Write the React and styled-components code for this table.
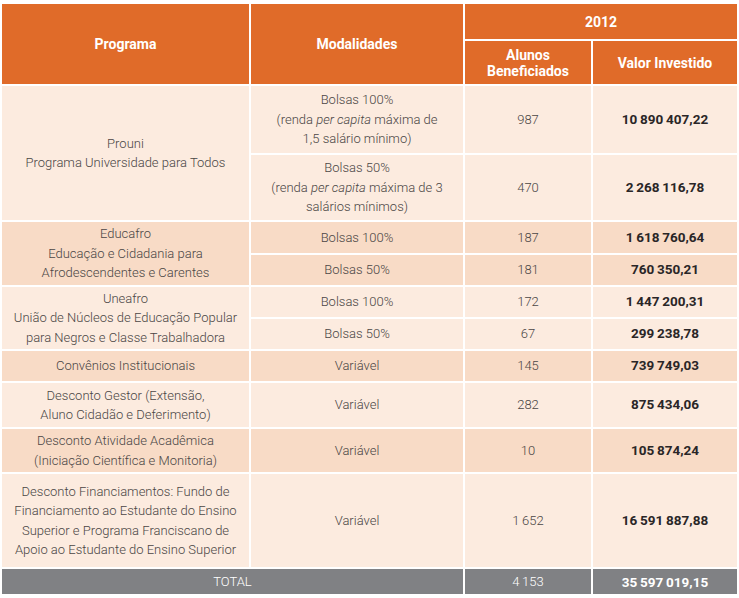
import React from "react";
import styled, { createGlobalStyle } from "styled-components";

const GlobalStyle = createGlobalStyle`
  body {
    margin: 0;
    background: #ffffff;
    font-family: Roboto, "Liberation Sans", sans-serif;
  }
`;

const Page = styled.div`
  padding: 2px 0 0 0;
`;

const Table = styled.table`
  width: 739px;
  table-layout: fixed;
  border-collapse: separate;
  border-spacing: 2px;
  font-size: 13px;
  color: #4a4645;
`;

const Head = styled.th`
  background: #e06b29;
  color: #ffffff;
  font-weight: 700;
  font-size: 14px;
  line-height: 16px;
  text-align: center;
  vertical-align: middle;
  padding: 0 4px;
  height: ${(p) => p.$h}px;
`;

const Cell = styled.td`
  background: ${(p) => (p.$dark ? "#f8dbc6" : "#fcebdf")};
  text-align: center;
  vertical-align: middle;
  line-height: 19.5px;
  font-weight: 300;
  padding: 0 4px;
  height: ${(p) => p.$h}px;
`;

const Value = styled(Cell)`
  font-weight: 700;
  font-size: 13.5px;
  color: #2a2627;
`;

const TotalCell = styled.td`
  background: #808184;
  color: #ffffff;
  text-align: center;
  vertical-align: middle;
  font-weight: ${(p) => (p.$bold ? 700 : 300)};
  font-size: ${(p) => (p.$bold ? "13.5px" : "13px")};
  height: 25px;
  padding: 0;
`;

const T = "\u2009";

const rows = [
  {
    prog: ["Prouni", "Programa Universidade para Todos"],
    dark: false,
    items: [
      { mod: <>Bolsas 100%<br />(renda <i>per capita</i> máxima de<br />1,5 salário mínimo)</>, alunos: "987", valor: `10${T}890${T}407,22`, h: 67 },
      { mod: <>Bolsas 50%<br />(renda <i>per capita</i> máxima de 3<br />salários mínimos)</>, alunos: "470", valor: `2${T}268${T}116,78`, h: 65 },
    ],
  },
  {
    prog: ["Educafro", "Educação e Cidadania para", "Afrodescendentes e Carentes"],
    dark: true,
    items: [
      { mod: "Bolsas 100%", alunos: "187", valor: `1${T}618${T}760,64`, h: 31 },
      { mod: "Bolsas 50%", alunos: "181", valor: `760${T}350,21`, h: 30 },
    ],
  },
  {
    prog: ["Uneafro", "União de Núcleos de Educação Popular", "para Negros e Classe Trabalhadora"],
    dark: false,
    items: [
      { mod: "Bolsas 100%", alunos: "172", valor: `1${T}447${T}200,31`, h: 30 },
      { mod: "Bolsas 50%", alunos: "67", valor: `299${T}238,78`, h: 30 },
    ],
  },
  {
    prog: ["Convênios Institucionais"],
    dark: true,
    items: [{ mod: "Variável", alunos: "145", valor: `739${T}749,03`, h: 30 }],
  },
  {
    prog: ["Desconto Gestor (Extensão,", "Aluno Cidadão e Deferimento)"],
    dark: false,
    items: [{ mod: "Variável", alunos: "282", valor: `875${T}434,06`, h: 44 }],
  },
  {
    prog: ["Desconto Atividade Acadêmica", "(Iniciação Científica e Monitoria)"],
    dark: true,
    items: [{ mod: "Variável", alunos: "10", valor: `105${T}874,24`, h: 43 }],
  },
  {
    prog: [
      "Desconto Financiamentos: Fundo de",
      "Financiamento ao Estudante do Ensino",
      "Superior e Programa Franciscano de",
      "Apoio ao Estudante do Ensino Superior",
    ],
    dark: false,
    items: [{ mod: "Variável", alunos: `1${T}652`, valor: `16${T}591${T}887,88`, h: 93 }],
  },
];

function Lines({ lines }) {
  return lines.map((l, i) => (
    <React.Fragment key={i}>
      {i > 0 && <br />}
      {l}
    </React.Fragment>
  ));
}

export default function App() {
  return (
    <Page>
      <GlobalStyle />
      <Table>
        <colgroup>
          <col style={{ width: 247 }} />
          <col style={{ width: 212 }} />
          <col style={{ width: 126 }} />
          <col style={{ width: 144 }} />
        </colgroup>
        <thead>
          <tr>
            <Head rowSpan={2}>Programa</Head>
            <Head rowSpan={2}>Modalidades</Head>
            <Head colSpan={2} $h={35}>2012</Head>
          </tr>
          <tr>
            <Head $h={43}>Alunos<br />Beneficiados</Head>
            <Head $h={43}>Valor Investido</Head>
          </tr>
        </thead>
        <tbody>
          {rows.map((r, ri) =>
            r.items.map((it, ii) => (
              <tr key={`${ri}-${ii}`}>
                {ii === 0 && (
                  <Cell $dark={r.dark} rowSpan={r.items.length}>
                    <Lines lines={r.prog} />
                  </Cell>
                )}
                <Cell $dark={r.dark} $h={it.h}>{it.mod}</Cell>
                <Cell $dark={r.dark}>{it.alunos}</Cell>
                <Value $dark={r.dark}>{it.valor}</Value>
              </tr>
            ))
          )}
          <tr>
            <TotalCell colSpan={2}>TOTAL</TotalCell>
            <TotalCell>{`4${T}153`}</TotalCell>
            <TotalCell $bold>{`35${T}597${T}019,15`}</TotalCell>
          </tr>
        </tbody>
      </Table>
    </Page>
  );
}
